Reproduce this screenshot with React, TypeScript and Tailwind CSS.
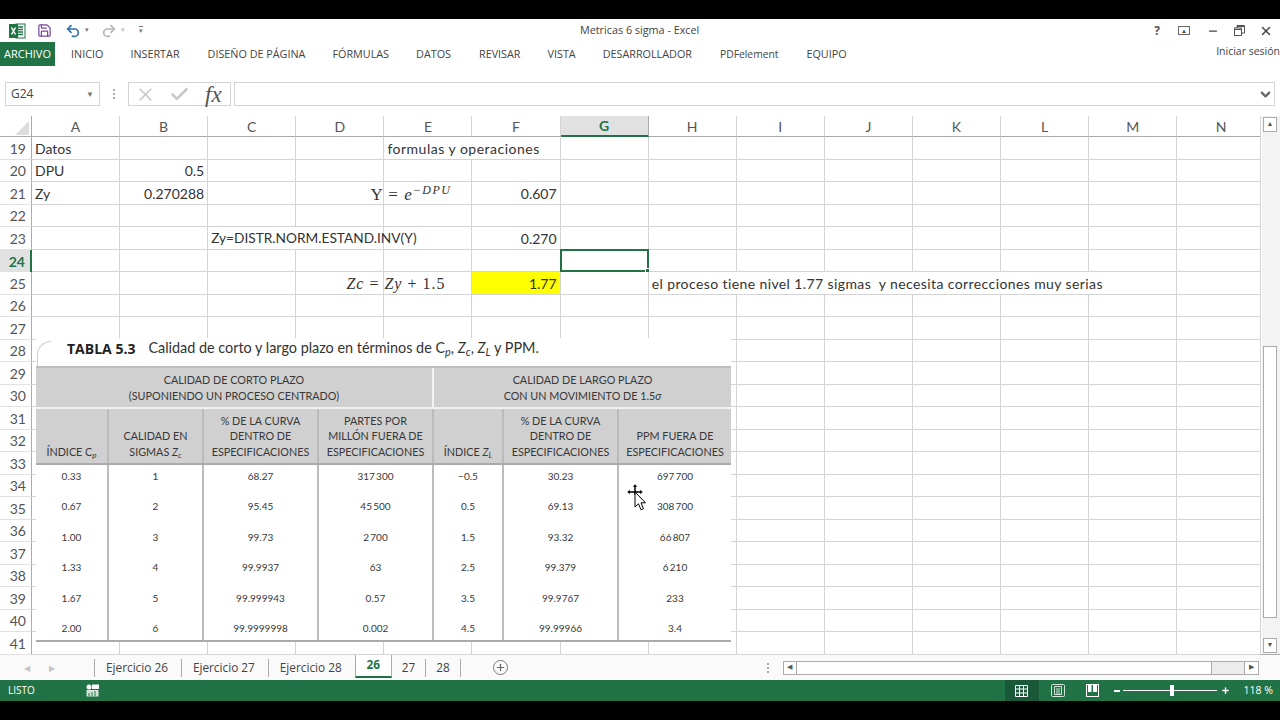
import React from 'react';
import { Save, Undo2, Redo2, Minus, X, Check, ChevronDown, Plus } from 'lucide-react';

const columns = ['A', 'B', 'C', 'D', 'E', 'F', 'G', 'H', 'I', 'J', 'K', 'L', 'M', 'N'];
const rows = Array.from({ length: 23 }, (_, i) => 19 + i);

// cells with content; key = column + row
const cells: Record<string, { text: string; right?: boolean; span?: 2 | 6; cls?: string }> = {
  A19: { text: 'Datos' },
  A20: { text: 'DPU' },
  B20: { text: '0.5', right: true },
  A21: { text: 'Zy' },
  B21: { text: '0.270288', right: true },
  E19: { text: 'formulas y operaciones', span: 2, cls: 'tracking-[0.5px]' },
  F21: { text: '0.607', right: true },
  C23: { text: 'Zy=DISTR.NORM.ESTAND.INV(Y)', span: 2, cls: 'text-[13.700px]' },
  F23: { text: '0.270', right: true },
  F25: { text: '1.77', right: true },
  H25: { text: 'el proceso tiene nivel 1.77 sigmas  y necesita correcciones muy serias', span: 6, cls: 'tracking-[0.4px]' },
};

const skipped = ['F19', 'D23', 'I25', 'J25', 'K25', 'L25', 'M25'];

const ribbonTabs = [
  { label: 'INICIO', cls: 'ml-[16px]' },
  { label: 'INSERTAR', cls: 'ml-[27px]' },
  { label: 'DISEÑO DE PÁGINA', cls: 'ml-[28px]' },
  { label: 'FÓRMULAS', cls: 'ml-[27px]' },
  { label: 'DATOS', cls: 'ml-[27px]' },
  { label: 'REVISAR', cls: 'ml-[28px]' },
  { label: 'VISTA', cls: 'ml-[27px]' },
  { label: 'DESARROLLADOR', cls: 'ml-[27px]' },
  { label: 'PDFelement', cls: 'ml-[28px] text-[10.300px]' },
  { label: 'EQUIPO', cls: 'ml-[28px]' },
];

const bodyRows = [
  ['0.33', '1', '68.27', '317\u2009300', '−0.5', '30.23', '697\u2009700'],
  ['0.67', '2', '95.45', '45\u2009500', '0.5', '69.13', '308\u2009700'],
  ['1.00', '3', '99.73', '2\u2009700', '1.5', '93.32', '66\u2009807'],
  ['1.33', '4', '99.9937', '63', '2.5', '99.379', '6\u2009210'],
  ['1.67', '5', '99.999943', '0.57', '3.5', '99.9767', '233'],
  ['2.00', '6', '99.9999998', '0.002', '4.5', '99.99966', '3.4'],
];

const Sep = () => <div className="w-px h-[18px] bg-[#ababab]" />;

const ExcelLogo = () => (
  <svg width="17" height="16" viewBox="0 0 17 16">
    <rect x="7" y="1" width="9" height="14" fill="#fff" stroke="#217346" />
    <path d="M9 4h5M9 6.5h5M9 9h5M9 11.500h5" stroke="#217346" strokeWidth="1.500" />
    <rect x="0" y="1" width="9" height="14" fill="#217346" />
    <path d="M2.500 4.500l4 7M6.500 4.500l-4 7" stroke="#fff" strokeWidth="1.500" />
  </svg>
);

const PaperTable = () => (
  <div className="absolute left-[36px] top-[222px] w-[695px] h-[304px] bg-white flex flex-col font-['Lato',sans-serif] text-[#383838]">
    <div className="relative h-[28px] shrink-0 flex items-center pl-[31px] pb-[8px] text-[14.400px] text-[#333] whitespace-nowrap">
      <div className="absolute left-[1px] top-[3px] w-[14px] h-[25px] border-l border-t border-[#cfcfcf] rounded-tl-[14px]" />
      <span className="font-bold text-[#222] font-['Open_Sans',sans-serif] text-[14px]">TABLA 5.3</span>
      <span className="ml-[13px]">
        Calidad de corto y largo plazo en términos de C<sub className="italic">p</sub>, <i>Z</i><sub className="italic">c</sub>, <i>Z</i><sub className="italic">L</sub> y PPM.
      </span>
    </div>
    <div className="h-[41px] shrink-0 grid grid-cols-[396px_299px] bg-[#d0d0d0] border-t-2 border-[#bdbdbd] text-[10.800px] leading-[15.500px] text-center">
      <div className="flex flex-col justify-center">
        <span>CALIDAD DE CORTO PLAZO</span>
        <span>(SUPONIENDO UN PROCESO CENTRADO)</span>
      </div>
      <div className="flex flex-col justify-center border-l-2 border-[#f2f2f2]">
        <span>CALIDAD DE LARGO PLAZO</span>
        <span>CON UN MOVIMIENTO DE 1.5<i>σ</i></span>
      </div>
    </div>
    <div className="h-[58px] shrink-0 grid grid-cols-[71px_95px_115px_115px_70px_115px_114px] bg-[#d0d0d0] border-t-2 border-[#f2f2f2] border-b-2 border-b-[#aaaaaa] text-[10.800px] leading-[15.500px] text-center">
      <div className="flex flex-col justify-end pb-[4px]"><span>ÍNDICE C<sub className="italic">p</sub></span></div>
      <div className="flex flex-col justify-end pb-[4px] border-l-2 border-[#bbbbbb]"><span>CALIDAD EN</span><span>SIGMAS <i>Z</i><sub className="italic">c</sub></span></div>
      <div className="flex flex-col justify-end pb-[4px] border-l-2 border-[#bbbbbb]"><span>% DE LA CURVA</span><span>DENTRO DE</span><span>ESPECIFICACIONES</span></div>
      <div className="flex flex-col justify-end pb-[4px] border-l-2 border-[#bbbbbb]"><span>PARTES POR</span><span>MILLÓN FUERA DE</span><span>ESPECIFICACIONES</span></div>
      <div className="flex flex-col justify-end pb-[4px] border-l-2 border-[#bbbbbb]"><span>ÍNDICE <i>Z</i><sub className="italic">L</sub></span></div>
      <div className="flex flex-col justify-end pb-[4px] border-l-2 border-[#bbbbbb]"><span>% DE LA CURVA</span><span>DENTRO DE</span><span>ESPECIFICACIONES</span></div>
      <div className="flex flex-col justify-end pb-[4px] border-l-2 border-[#bbbbbb]"><span>PPM FUERA DE</span><span>ESPECIFICACIONES</span></div>
    </div>
    <div className="flex-1 min-h-0 overflow-hidden grid grid-cols-[71px_95px_115px_115px_70px_115px_114px] border-b-2 border-[#aaaaaa] text-[10px] text-center">
      {[0, 1, 2, 3, 4, 5, 6].map((col) => (
        <div key={col} className={col === 0 ? 'flex flex-col' : 'flex flex-col border-l-2 border-[#bbbbbb]'}>
          {bodyRows.map((r) => (
            <div key={r[0]} className="h-[30.400px] shrink-0 flex items-start justify-center pt-[4px]">{r[col]}</div>
          ))}
        </div>
      ))}
    </div>
  </div>
);

const Cursor = () => (
  <svg className="absolute left-[627px] top-[368px]" width="20" height="28" viewBox="0 0 20 28">
    <path d="M8 0l2.500 3H9v4h4V5.500L16 8l-3 2.500V9H9v2H7V9H3v1.500L0 8l3-2.500V7h4V3H5.500z" fill="#000" stroke="#fff" strokeWidth=".5" />
    <path d="M8 8v15l3.500-3.200 2.500 6 2.500-1-2.500-6h4.500z" fill="#fff" stroke="#000" />
  </svg>
);

const App = () => {
  return (
    <div className="w-[1280px] h-[720px] bg-black py-[19px] overflow-hidden font-['Open_Sans',sans-serif]">
      <div className="h-[682px] bg-white flex flex-col">
        {/* title bar */}
        <div className="relative h-[23px] flex items-center text-[#444]">
          <div className="ml-[9px]"><ExcelLogo /></div>
          <Save size={15} className="ml-[11px] text-[#7b4a9e]" />
          <Undo2 size={16} className="ml-[13px] text-[#2f6fa8]" strokeWidth={2.5} />
          <span className="ml-[4px] text-[7px] text-[#777]">▾</span>
          <Redo2 size={16} className="ml-[12px] text-[#b5b5b5]" strokeWidth={2.5} />
          <span className="ml-[4px] text-[7px] text-[#bbb]">▾</span>
          <span className="ml-[14px] text-[7px] text-[#777] border-t border-[#777] leading-[8px]">▾</span>
          <span className="absolute left-[580px] text-[10.800px] text-[#444] whitespace-nowrap">Metricas 6 sigma - Excel</span>
          <span className="ml-auto text-[12px] font-bold text-[#555]">?</span>
          <div className="ml-[18px] w-[12px] h-[9px] border border-[#666] flex items-center justify-center text-[6px] leading-none">▲</div>
          <Minus size={12} className="ml-[17px] text-[#444]" strokeWidth={2.5} />
          <svg className="ml-[15px]" width="11" height="11" viewBox="0 0 11 11" fill="none" stroke="#555">
            <rect x="0.500" y="3" width="7" height="7.500" />
            <path d="M3 3V.5h7.500V8H8" />
            <path d="M.5 4.500h7M3 1.500h7.500" />
          </svg>
          <X size={14} className="ml-[14px] mr-[7px] text-[#444]" strokeWidth={2.5} />
        </div>
        {/* ribbon tabs */}
        <div className="h-[24px] flex items-center text-[10.800px] text-[#444] whitespace-nowrap">
          <div className="w-[55px] h-full bg-[#217346] text-white flex items-center justify-center text-[11px]">ARCHIVO</div>
          {ribbonTabs.map((t) => (
            <span key={t.label} className={`${t.cls} pt-[1px]`}>{t.label}</span>
          ))}
          <span className="ml-auto text-[10.500px] -mt-[5px]">Iniciar sesión</span>
        </div>
        {/* formula bar */}
        <div className="h-[24px] mt-[16px] flex items-stretch text-[#444]">
          <div className="ml-[5px] w-[95px] border border-[#d4d4d4] flex items-center justify-between pl-[5px] pr-[5px] text-[12px]">
            <span>G24</span>
            <span className="text-[8px] text-[#777]">▼</span>
          </div>
          <div className="w-[28px] flex flex-col items-center justify-center gap-[2px]">
            <div className="w-[2px] h-[2px] bg-[#aaa]" />
            <div className="w-[2px] h-[2px] bg-[#aaa]" />
            <div className="w-[2px] h-[2px] bg-[#aaa]" />
          </div>
          <div className="w-[103px] border border-[#d4d4d4] flex items-center">
            <X size={21} className="ml-[6px] text-[#c8c8c8]" strokeWidth={2} />
            <Check size={21} className="ml-[13px] text-[#c8c8c8]" strokeWidth={3} />
            <span className="ml-[15px] font-['Liberation_Serif',serif] italic text-[23px] leading-none text-[#555]">fx</span>
          </div>
          <div className="ml-[3px] w-[1041px] border border-[#d4d4d4] flex items-center justify-end pr-[1px]">
            <ChevronDown size={15} className="text-[#666]" strokeWidth={3.5} />
          </div>
        </div>
        {/* sheet area */}
        <div className="mt-[10px] flex-1 flex min-h-0">
          <div className="relative w-[1262px] font-['Lato',sans-serif] text-[14px] text-[#333]">
            <div className="grid grid-cols-[32px_repeat(13,88.100px)_84px] grid-rows-[21px_repeat(23,22.500px)]">
              <div className="relative border-r border-b border-[#ababab]">
                <svg className="absolute left-[15px] top-[5px]" width="14" height="14" viewBox="0 0 14 14">
                  <path d="M14 0v14H0z" fill="#dcdcdc" />
                </svg>
              </div>
              {columns.map((c) =>
                c === 'G' ? (
                  <div key={c} className="flex items-center justify-center bg-[#e1e1e1] border-r border-[#ababab] border-b-2 border-b-[#217346] font-bold text-[#217346]">{c}</div>
                ) : (
                  <div key={c} className={`flex items-center justify-center border-r border-[#d4d4d4] border-b border-b-[#ababab] text-[#555] ${c === 'N' ? 'pl-[5px]' : ''}`}>{c}</div>
                ),
              )}
              {rows.map((r) => (
                <React.Fragment key={r}>
                  {r === 24 ? (
                    <div className="flex items-center justify-end pr-[5px] pt-[1px] bg-[#e1e1e1] border-r-2 border-[#217346] font-bold text-[#217346]">{r}</div>
                  ) : (
                    <div className="flex items-center justify-end pr-[5px] pt-[1px] border-r border-[#ababab] border-b border-b-[#e2e2e2] text-[#555]">{r}</div>
                  )}
                  {columns.map((c) => {
                    const id = c + r;
                    if (skipped.includes(id)) return null;
                    const cell = cells[id];
                    return (
                      <div
                        key={id}
                        className={`relative flex items-center px-[3px] pt-[1px] whitespace-pre border-r border-b border-[#d4d4d4] ${cell?.right ? 'justify-end' : ''} ${cell?.span === 2 ? 'col-span-2' : ''} ${cell?.span === 6 ? 'col-span-6' : ''} ${id === 'F25' ? 'bg-[#ffff00]' : ''} ${cell?.cls ?? ''}`}
                      >
                        {cell?.text}
                        {id === 'E21' && (
                          <span className="absolute right-[20px] top-[0px] font-['Liberation_Serif',serif] text-[17px] tracking-[1px] text-[#333] whitespace-nowrap">
                            Y = <i>e</i><sup className="italic text-[12px] tracking-[1.500px]">−DPU</sup>
                          </span>
                        )}
                        {id === 'E25' && (
                          <span className="absolute right-[26px] top-[0px] font-['Liberation_Serif',serif] text-[16px] tracking-[1px] text-[#333] whitespace-pre">
                            <i>Zc</i> = <i>Zy</i> + 1.5
                          </span>
                        )}
                        {id === 'G24' && (
                          <div className="absolute -left-px -top-px -right-px -bottom-px border-2 border-[#217346]">
                            <div className="absolute -right-[3px] -bottom-[3px] w-[5px] h-[5px] bg-[#217346] border border-white" />
                          </div>
                        )}
                      </div>
                    );
                  })}
                </React.Fragment>
              ))}
            </div>
            <PaperTable />
            <Cursor />
          </div>
          {/* vertical scrollbar */}
          <div className="w-[18px] bg-[#f3f3f3] flex flex-col items-start pl-px">
            <div className="w-[14px] h-[15px] mt-[1px] bg-white border border-[#ababab] flex items-center justify-center text-[7px] text-[#555]">▲</div>
            <div className="w-[14px] h-[272px] mt-[214px] bg-white border border-[#ababab]" />
            <div className="w-[14px] h-[15px] mt-auto mb-[1px] bg-white border border-[#ababab] flex items-center justify-center text-[7px] text-[#555]">▼</div>
          </div>
        </div>
        {/* sheet tabs */}
        <div className="h-[26px] border-t border-[#ababab] flex items-center text-[11.800px] text-[#444] whitespace-nowrap bg-[#fafafa]">
          <span className="ml-[24px] text-[8px] text-[#c4c4c4]">◀</span>
          <span className="ml-[19px] text-[8px] text-[#c4c4c4]">▶</span>
          <div className="ml-[39px]"><Sep /></div>
          <span className="ml-[11px]">Ejercicio 26</span>
          <div className="ml-[13px]"><Sep /></div>
          <span className="ml-[11px]">Ejercicio 27</span>
          <div className="ml-[13px]"><Sep /></div>
          <span className="ml-[11px]">Ejercicio 28</span>
          <div className="ml-[13px] w-[37px] self-start h-[24px] -mt-px bg-white flex items-center justify-center font-bold text-[#217346] border-x border-[#ababab] border-b-2 border-b-[#217346]">26</div>
          <span className="ml-[10px]">27</span>
          <div className="ml-[10px]"><Sep /></div>
          <span className="ml-[10px]">28</span>
          <div className="ml-[10px]"><Sep /></div>
          <div className="ml-[32px] w-[15px] h-[15px] rounded-full border border-[#777] flex items-center justify-center">
            <Plus size={11} className="text-[#666]" strokeWidth={2.5} />
          </div>
          <div className="ml-[259px] flex flex-col gap-[2px]">
            <div className="w-[2px] h-[2px] bg-[#aaa]" />
            <div className="w-[2px] h-[2px] bg-[#aaa]" />
            <div className="w-[2px] h-[2px] bg-[#aaa]" />
          </div>
          <div className="ml-[14px] w-[476px] h-[14px] flex bg-[#ececec] border border-[#ababab]">
            <div className="w-[13px] border-r border-[#ababab] bg-white flex items-center justify-center text-[7px] text-[#555]">◀</div>
            <div className="w-[415px] bg-white border-r border-[#ababab]" />
            <div className="ml-auto w-[14px] border-l border-[#ababab] bg-white flex items-center justify-center text-[7px] text-[#555]">▶</div>
          </div>
        </div>
        {/* status bar */}
        <div className="h-[21px] bg-[#217346] flex items-center text-white text-[10px]">
          <span className="ml-[8px]">LISTO</span>
          <svg className="ml-[51px]" width="13" height="13" viewBox="0 0 13 13">
            <circle cx="3" cy="3" r="2.500" fill="#fff" />
            <rect x="6" y="0.500" width="7" height="4.500" fill="#fff" />
            <rect x="0.500" y="6" width="12" height="6.500" fill="#cfe6d8" />
            <path d="M3 12V9M6 12V8M9 12V7" stroke="#217346" />
          </svg>
          <div className="ml-auto w-[34px] h-full bg-[#19593a] flex items-center justify-center">
            <svg width="13" height="12" viewBox="0 0 13 12" fill="none" stroke="#fff">
              <path d="M.5.500h12v11H.5zM4.500.5v11M8.500.5v11M.5 4h12M.5 8h12" />
            </svg>
          </div>
          <svg className="ml-[12px]" width="14" height="13" viewBox="0 0 14 13" fill="none" stroke="#cfe6d8">
            <rect x=".5" y=".5" width="13" height="12" rx="1" />
            <path d="M3.500 2.500h7v8h-7zM5 5h4M5 7h4M5 9h4" />
          </svg>
          <svg className="ml-[21px]" width="13" height="13" viewBox="0 0 13 13">
            <rect x=".5" y=".5" width="12" height="12" fill="none" stroke="#fff" />
            <rect x="2" y="1" width="3.500" height="7" fill="#fff" />
            <rect x="7" y="1" width="4" height="7" fill="#fff" />
          </svg>
          <div className="ml-[15px] w-[6px] h-[2px] bg-white" />
          <div className="relative ml-[3px] w-[94px] h-px bg-white">
            <div className="absolute left-[47px] -top-[5px] w-[4px] h-[11px] bg-white" />
          </div>
          <Plus size={9} className="ml-[4px]" strokeWidth={4} />
          <span className="ml-[14px] mr-[7px] text-[10.500px]">118 %</span>
        </div>
      </div>
    </div>
  );
};

export default App;
